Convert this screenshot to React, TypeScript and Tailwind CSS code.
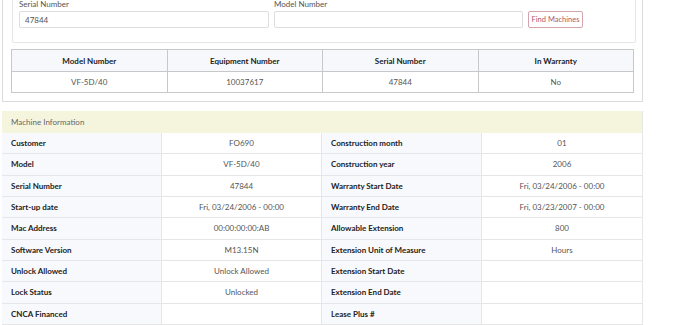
import React from "react";

const font = { fontFamily: 'Lato, "Open Sans", sans-serif' };

const results = [
  { model: "VF-5D/40", equipment: "10037617", serial: "47844", warranty: "No" },
];

const info: [string, string, string, string][] = [
  ["Customer", "FO690", "Construction month", "01"],
  ["Model", "VF-5D/40", "Construction year", "2006"],
  ["Serial Number", "47844", "Warranty Start Date", "Fri, 03/24/2006 - 00:00"],
  ["Start-up date", "Fri, 03/24/2006 - 00:00", "Warranty End Date", "Fri, 03/23/2007 - 00:00"],
  ["Mac Address", "00:00:00:00:AB", "Allowable Extension", "800"],
  ["Software Version", "M13.15N", "Extension Unit of Measure", "Hours"],
  ["Unlock Allowed", "Unlock Allowed", "Extension Start Date", ""],
  ["Lock Status", "Unlocked", "Extension End Date", ""],
  ["CNCA Financed", "", "Lease Plus #", ""],
];

export default function App() {
  return (
    <div className="w-[700px] h-[325px] overflow-hidden bg-white text-[8px]" style={font}>
      {/* Machine search card */}
      <div className="ml-[2px] w-[641px] -mt-[18px] border border-[#dcdcdc] px-[8px] pt-[8px] pb-[8px]">
        <div className="ml-[1px] -mr-[2px] border border-[#e6e6e6] rounded-[2px] px-[6px] pt-[7px] pb-[14px]">
          <div className="flex items-end gap-[5px]">
            <div className="w-[250px]">
              <div className="h-[11px] leading-[11px] text-[#555]">Serial Number</div>
              <div className="mt-[1px] h-[17px] border border-[#dedede] rounded-[2px] px-[5px] flex items-center text-[#555]">
                47844
              </div>
            </div>
            <div className="w-[249px]">
              <div className="h-[11px] leading-[11px] text-[#555]">Model Number</div>
              <div className="mt-[1px] h-[17px] border border-[#dedede] rounded-[2px]" />
            </div>
            <button className="h-[17px] w-[55px] border border-[#d4a3ab] rounded-[2px] text-[#b0566a] text-[7.5px] flex items-center justify-center">
              Find Machines
            </button>
          </div>
        </div>
        <table className="mt-[6px] w-[623px] border-collapse table-fixed">
          <thead>
            <tr className="h-[22px] bg-[#f7f8fc]">
              {["Model Number", "Equipment Number", "Serial Number", "In Warranty"].map((h) => (
                <th key={h} className="border border-[#c8c8c8] font-bold text-[#222] text-center p-0">
                  {h}
                </th>
              ))}
            </tr>
          </thead>
          <tbody>
            {results.map((r) => (
              <tr key={r.serial} className="h-[21px]">
                <td className="border border-[#c8c8c8] text-center text-[#555] p-0">{r.model}</td>
                <td className="border border-[#c8c8c8] text-center text-[#555] p-0">{r.equipment}</td>
                <td className="border border-[#c8c8c8] text-center text-[#555] p-0">{r.serial}</td>
                <td className="border border-[#c8c8c8] text-center text-[#555] p-0">{r.warranty}</td>
              </tr>
            ))}
          </tbody>
        </table>
      </div>

      {/* Machine Information */}
      <div className="ml-[2px] w-[641px] mt-[9px] border-r border-[#e6e6e6]">
        <div className="h-[22px] bg-[#f5f5de] flex items-center px-[9px] text-[#666]">Machine Information</div>
        {info.map(([l1, v1, l2, v2]) => (
          <div key={l1} className="grid grid-cols-4 h-[21.33px] border-b border-[#e6e6e6]">
            <div className="bg-[#f8f9fc] flex items-center px-[9px] font-bold text-[#222] border-r border-[#e6e6e6]">
              {l1}
            </div>
            <div className="flex items-center justify-center text-[#555] border-r border-[#e6e6e6]">{v1}</div>
            <div className="bg-[#f8f9fc] flex items-center px-[9px] font-bold text-[#222] border-r border-[#e6e6e6]">
              {l2}
            </div>
            <div className="flex items-center justify-center text-[#555]">{v2}</div>
          </div>
        ))}
      </div>
    </div>
  );
}
